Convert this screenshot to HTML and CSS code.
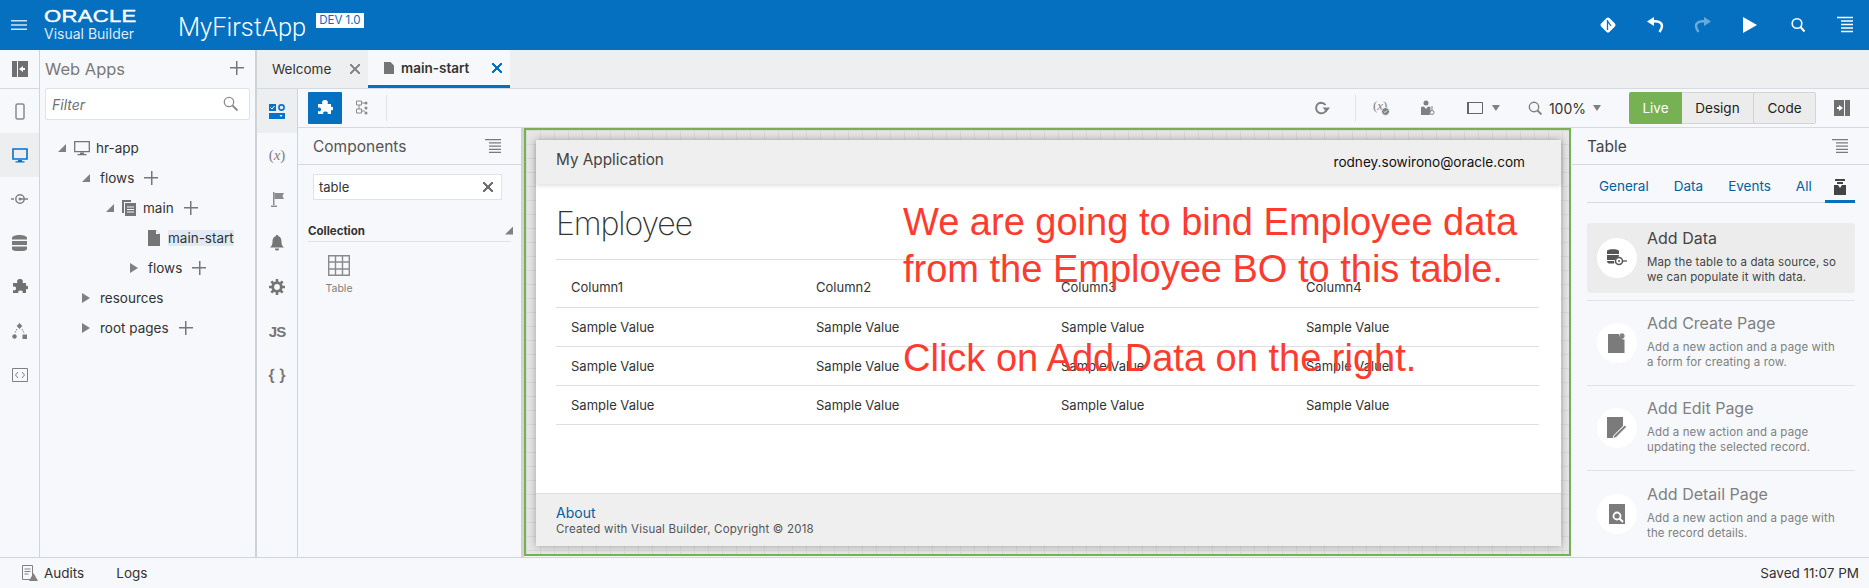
FILE: index.html
```html
<!DOCTYPE html>
<html lang="en">
<head>
    <meta charset="UTF-8">
    <title>MyFirstApp - Visual Builder</title>
    <link rel="stylesheet" href="styles.css">
</head>
<body>
    <header class="topbar">
        <svg class="hamburger" width="16" height="10" viewBox="0 0 16 10"><path d="M0 0h16v1.500H0zM0 4.200h16v1.500H0zM0 8.500h16V10H0z" fill="#cfe3f4"/></svg>
        <div class="brand">
            <span class="brand-oracle">ORACLE</span>
            <span class="brand-product">Visual Builder</span>
        </div>
        <span class="app-name">MyFirstApp</span>
        <span class="app-badge">DEV 1.0</span>
        <div class="topbar-actions">
            <svg width="18" height="18" viewBox="0 0 18 18"><path d="M9 1.500c.5 0 1 .2 1.400.6l5.500 5.500c.8.800.8 2 0 2.800l-5.500 5.500c-.8.800-2 .8-2.800 0L2.100 10.400c-.8-.8-.8-2 0-2.800l5.500-5.500c.4-.4.9-.6 1.400-.6z" fill="#fff"/><path d="M8.500 4v10M8.500 5l3.500 5" stroke="#0570c0" stroke-width="1.300" fill="none"/></svg>
            <svg width="18" height="18" viewBox="0 0 18 18"><path d="M1 5.500L8 1v9z" fill="#fff"/><path d="M6 5.500c5-1 10 .5 10 4.500 0 2.500-1 4-2.500 6" fill="none" stroke="#fff" stroke-width="2.400"/></svg>
            <svg width="18" height="18" viewBox="0 0 18 18"><path d="M17 5.500L10 1v9z" fill="#6aa9dc"/><path d="M12 5.500C7 4.500 2 6 2 10c0 2.500 1 4 2.500 6" fill="none" stroke="#6aa9dc" stroke-width="2.400"/></svg>
            <svg width="18" height="18" viewBox="0 0 18 18"><path d="M2 1l14 8-14 8z" fill="#fff"/></svg>
            <svg width="18" height="18" viewBox="0 0 18 18"><circle cx="8" cy="7.500" r="4.800" fill="none" stroke="#fff" stroke-width="1.600"/><path d="M11.500 11l4 4.500" stroke="#fff" stroke-width="2"/></svg>
            <svg width="18" height="18" viewBox="0 0 18 18"><path d="M1 1.500h16M5 5h12M5 8.500h12M5 12h12M5 15.500h12" stroke="#fff" stroke-width="1.500"/></svg>
        </div>
    </header>

    <div class="workspace">
        <nav class="rail">
            <div class="rail-item rail-top">
                <svg width="16" height="16" viewBox="0 0 16 16"><path d="M0 0h5v16H0zM6 0h10v16H6z" fill="#707070"/><path d="M7 8l4-3v2h2v2h-2v2z" fill="#fff"/></svg>
            </div>
            <div class="rail-item"><svg width="10" height="17" viewBox="0 0 10 17"><rect x="1" y="1" width="8" height="15" rx="1.500" fill="none" stroke="#8a8a8a" stroke-width="1.500"/></svg></div>
            <div class="rail-item rail-active"><svg width="16" height="15" viewBox="0 0 16 15"><path d="M1 1h14v10H1z" fill="none" stroke="#0572ce" stroke-width="1.600"/><path d="M6 12h4v1.200h2.500v1.200h-9v-1.200H6z" fill="#0572ce"/></svg></div>
            <div class="rail-item"><svg width="17" height="12" viewBox="0 0 17 12"><circle cx="9" cy="6" r="4.200" fill="none" stroke="#808080" stroke-width="1.500"/><circle cx="9" cy="6" r="1.500" fill="#808080"/><path d="M0 6h3M9 6h8" stroke="#808080" stroke-width="1.300"/></svg></div>
            <div class="rail-item"><svg width="15" height="16" viewBox="0 0 15 16"><path d="M0 3c0-4 15-4 15 0v1.500H0zM0 6h15v4H0zM0 11.500h15V14c0 3-15 3-15 0z" fill="#7a7a7a"/></svg></div>
            <div class="rail-item"><svg width="16" height="16" viewBox="0 0 16 16"><use href="#puzzle" fill="#707070"/></svg></div>
            <div class="rail-item"><svg width="15" height="16" viewBox="0 0 15 16"><path d="M7.500 0l2.800 3-2.800 3-2.800-3z" fill="#7a7a7a"/><circle cx="2.500" cy="13.500" r="2.200" fill="#7a7a7a"/><path d="M10.500 11.500h4.500V16h-4.500z" fill="#7a7a7a"/><path d="M5 6l-2 4M10 6l2 4" stroke="#7a7a7a" stroke-dasharray="1.500 1"/></svg></div>
            <div class="rail-item"><svg width="16" height="14" viewBox="0 0 16 14"><path d="M.5.500h15v13H.5z" fill="none" stroke="#808080"/><path d="M6 4L3.500 7 6 10M10 4l2.500 3L10 10" fill="none" stroke="#808080"/></svg></div>
        </nav>

        <aside class="navigator">
            <div class="nav-head">
                <span class="nav-title">Web Apps</span>
                <span class="plus plus-big"></span>
            </div>
            <div class="nav-filter">
                <span>Filter</span>
                <svg width="16" height="16" viewBox="0 0 16 16"><circle cx="6" cy="6" r="4.700" fill="none" stroke="#8c8c8c" stroke-width="1.300"/><path d="M9.500 9.500l5 5" stroke="#8c8c8c" stroke-width="2"/></svg>
            </div>
            <ul class="tree">
                <li class="tree-row level-0"><i class="tri tri-open"></i><svg class="tree-icon" width="16" height="15" viewBox="0 0 16 15"><path d="M.7.700h14.600v10H.7z" fill="none" stroke="#757575" stroke-width="1.300"/><path d="M6 11.500h4v1.500h2.500v1.200h-9V13H6z" fill="#757575"/></svg><span class="tree-label">hr-app</span></li>
                <li class="tree-row level-1"><i class="tri tri-open"></i><span class="tree-label">flows</span><span class="plus"></span></li>
                <li class="tree-row level-2"><i class="tri tri-open"></i><svg class="tree-icon" width="14" height="16" viewBox="0 0 14 16"><path d="M0 0h9v2H2v11H0z" fill="#757575"/><path d="M3 3h11v13H3z" fill="#757575"/><path d="M5 7h7M5 9.500h7M5 12h7" stroke="#f6f8fb"/></svg><span class="tree-label">main</span><span class="plus"></span></li>
                <li class="tree-row level-3"><svg class="tree-icon" width="12" height="16" viewBox="0 0 12 16"><path d="M0 0h8l4 4v12H0z" fill="#757575"/><path d="M8 0v4h4" fill="#f6f8fb"/></svg><span class="tree-label tree-selected">main-start</span></li>
                <li class="tree-row level-4"><i class="tri"></i><span class="tree-label">flows</span><span class="plus"></span></li>
                <li class="tree-row level-1"><i class="tri"></i><span class="tree-label">resources</span></li>
                <li class="tree-row level-1"><i class="tri"></i><span class="tree-label">root pages</span><span class="plus"></span></li>
            </ul>
        </aside>

        <div class="editor">
            <div class="tabs">
                <div class="tab">
                    <span class="tab-label">Welcome</span>
                    <span class="close close-grey"></span>
                </div>
                <div class="tab tab-active">
                    <svg width="10" height="12" viewBox="0 0 10 12"><path d="M0 0h6.500L10 3.500V12H0z" fill="#757575"/></svg>
                    <span class="tab-label">main-start</span>
                    <span class="close close-blue"></span>
                </div>
            </div>

            <div class="editor-body">
                <nav class="subrail">
                    <div class="rail-item rail-active"><svg width="16" height="15" viewBox="0 0 16 15"><path d="M0 0h7v7H0zM0 9h16v6H0z" fill="#0572ce"/><circle cx="12.500" cy="3.500" r="2.600" fill="none" stroke="#0572ce" stroke-width="1.600"/><path d="M1.500 3.500l1.500 1.500 2.500-3" fill="none" stroke="#fff"/><path d="M10.500 11h3l-1.500 2z" fill="#fff"/></svg></div>
                    <div class="rail-item"><span class="var-glyph">(<i>x</i>)</span></div>
                    <div class="rail-item"><svg width="13" height="16" viewBox="0 0 13 16"><path d="M2 1h1.500v13H2z" fill="#8c8c8c"/><path d="M3.500 2H13l-1.500 3L13 8H3.500z" fill="#8c8c8c"/><path d="M0 14.500h6V16H0z" fill="#8c8c8c"/></svg></div>
                    <div class="rail-item"><svg width="14" height="16" viewBox="0 0 14 16"><path d="M7 0c1 0 1.300.7 1.300 1.300C11 2 11.500 4.500 11.500 7c0 3 1 4 2.500 5.500H0C1.500 11 2.500 10 2.500 7c0-2.500.5-5 3.200-5.700C5.700.7 6 0 7 0zM5 13.500h4V14c0 2-4 2-4 0z" fill="#757575"/></svg></div>
                    <div class="rail-item"><svg width="16" height="16" viewBox="0 0 16 16"><circle cx="8" cy="8" r="4.300" fill="none" stroke="#757575" stroke-width="2.800"/><path d="M8 0v3M8 13v3M0 8h3M13 8h3M2.300 2.300l2.200 2.200M11.500 11.500l2.200 2.200M2.300 13.700l2.200-2.200M11.500 4.500l2.200-2.200" stroke="#757575" stroke-width="2.600"/></svg></div>
                    <div class="rail-item"><span class="js-glyph">JS</span></div>
                    <div class="rail-item"><span class="brace-glyph">{ }</span></div>
                </nav>

                <div class="designer">
                    <div class="toolbar">
                        <div class="tool-main"><svg width="16" height="16" viewBox="0 0 16 16"><use href="#puzzle" fill="#fff"/></svg></div>
                        <div class="tool-second"><svg width="12" height="16" viewBox="0 0 12 16"><path d="M.5 1h5v4h-5zM.5 9h5v4h-5z" fill="none" stroke="#8a8a8a"/><path d="M6 3h4M3 5v4M6 11h3" stroke="#8a8a8a"/><circle cx="10" cy="3" r="1.500" fill="#8a8a8a"/><circle cx="10" cy="8" r="1.500" fill="#8a8a8a"/><circle cx="10" cy="13" r="1.500" fill="#8a8a8a"/></svg></div>
                        <span class="tool-sep"></span>
                        <div class="tool-spacer"></div>
                        <svg class="tool-refresh" width="16" height="14" viewBox="0 0 16 14"><path d="M12.500 8.500A5.300 5.300 0 1 1 7 1.700c2 0 3.500.8 4.500 2.300" fill="none" stroke="#808080" stroke-width="2"/><path d="M8.500 6.500H16L12.500 11z" fill="#808080"/></svg>
                        <span class="tool-sep tool-sep-right"></span>
                        <span class="tool-var">(<i>x</i>)<svg class="tool-var-badge" width="9" height="9" viewBox="0 0 9 9"><circle cx="4.500" cy="4.500" r="4" fill="#808080" stroke="#f6f8fb"/><path d="M3 4.500l1 1 2-2" stroke="#fff" fill="none"/></svg></span>
                        <svg class="tool-person" width="14" height="16" viewBox="0 0 14 16"><circle cx="5" cy="3" r="2.500" fill="#808080"/><path d="M0 7l3-.5L5 9l2-2.500 2.500.5v4.500a3 3 0 0 0-.5 3.500H0z" fill="#808080"/><path d="M11 6v4" stroke="#808080"/><circle cx="11" cy="12.500" r="2" fill="#f6f8fb" stroke="#808080"/></svg>
                        <svg class="tool-frame" width="16" height="12" viewBox="0 0 16 12"><path d="M.5.500h15v11H.5z" fill="none" stroke="#666"/><path d="M0 0h2v12H0z" fill="#666"/></svg>
                        <i class="caret caret-frame"></i>
                        <svg class="tool-search" width="14" height="14" viewBox="0 0 14 14"><circle cx="6" cy="6" r="4.700" fill="none" stroke="#808080" stroke-width="1.400"/><path d="M9.500 9.500l4 4" stroke="#808080" stroke-width="1.800"/></svg>
                        <span class="tool-zoom">100%</span>
                        <i class="caret"></i>
                        <div class="mode-group">
                            <span class="mode mode-live">Live</span>
                            <span class="mode mode-design">Design</span>
                            <span class="mode mode-code">Code</span>
                        </div>
                        <svg class="tool-panel" width="16" height="16" viewBox="0 0 16 16"><path d="M0 0h10v16H0zM11 0h5v16h-5z" fill="#707070"/><path d="M9 8L5 5v2H3v2h2v2z" fill="#fff"/></svg>
                    </div>

                    <div class="panes">
                        <section class="components">
                            <div class="pane-head">
                                <span>Components</span>
                                <svg width="16" height="14" viewBox="0 0 16 14"><use href="#menu-lines"/></svg>
                            </div>
                            <div class="comp-search">
                                <span>table</span>
                                <span class="close close-dark"></span>
                            </div>
                            <div class="comp-group">
                                <span>Collection</span>
                                <i class="tri tri-open"></i>
                            </div>
                            <div class="comp-item">
                                <svg width="22" height="21" viewBox="0 0 22 21"><path d="M.7.700h20.600v19.600H.7zM.7 7h20.600M.7 14h20.600M7.500.7v19.600M14.500.7v19.600" fill="none" stroke="#8a8a8a" stroke-width="1.400"/></svg>
                                <span>Table</span>
                            </div>
                        </section>

                        <section class="canvas">
                            <div class="canvas-inner">
                                <div class="page">
                                    <div class="page-head">
                                        <span class="page-app">My Application</span>
                                        <span class="page-user">rodney.sowirono@oracle.com</span>
                                    </div>
                                    <div class="page-main">
                                        <h1>Employee</h1>
                                        <div class="sample-table">
                                            <div class="sample-row"><span>Column1</span><span>Column2</span><span>Column3</span><span>Column4</span></div>
                                            <div class="sample-row"><span>Sample Value</span><span>Sample Value</span><span>Sample Value</span><span>Sample Value</span></div>
                                            <div class="sample-row"><span>Sample Value</span><span>Sample Value</span><span>Sample Value</span><span>Sample Value</span></div>
                                            <div class="sample-row"><span>Sample Value</span><span>Sample Value</span><span>Sample Value</span><span>Sample Value</span></div>
                                        </div>
                                    </div>
                                    <div class="page-foot">
                                        <a class="page-about">About</a>
                                        <span class="page-copy">Created with Visual Builder, Copyright © 2018</span>
                                    </div>
                                    <p class="note note-top">We are going to bind Employee data<br>from the Employee BO to this table.</p>
                                    <p class="note note-bottom">Click on Add Data on the right.</p>
                                </div>
                            </div>
                        </section>

                        <section class="props">
                            <div class="pane-head pane-head-props">
                                <span>Table</span>
                                <svg width="16" height="14" viewBox="0 0 16 14"><use href="#menu-lines"/></svg>
                            </div>
                            <div class="prop-tabs">
                                <span>General</span>
                                <span>Data</span>
                                <span>Events</span>
                                <span>All</span>
                                <span class="prop-tab-active"><svg width="12" height="16" viewBox="0 0 12 16"><path d="M1 0h10v2H1zM3 3h6v2H3zM0 6h4l2 3 2-3h4v10H0z" fill="#444"/></svg></span>
                            </div>
                            <div class="quick quick-hover">
                                <div class="quick-icon"><svg width="20" height="18" viewBox="0 0 20 18"><path d="M0 2c0-2.500 12-2.500 12 0v3H0zM0 6h12v1.500c-2 .5-3.500 2-4 3.500H0zM0 12h7l.3 2.500H2c-1 0-2-1-2-2.500z" fill="#555"/><circle cx="12" cy="12" r="3.500" fill="none" stroke="#555" stroke-width="1.500"/><circle cx="12" cy="12" r="1" fill="#555"/><path d="M15 12h5" stroke="#555" stroke-width="1.300"/></svg></div>
                                <div class="quick-text">
                                    <span class="quick-title">Add Data</span>
                                    <span class="quick-desc">Map the table to a data source, so<br>we can populate it with data.</span>
                                </div>
                            </div>
                            <div class="quick">
                                <div class="quick-icon"><svg width="18" height="20" viewBox="0 0 18 20"><path d="M0 1h11c0 3 2.500 5.500 5.500 5.500V20H0z" fill="#7b7b7b"/><path d="M14 0v6M11 3h6M12 1l4 4M16 1l-4 4" stroke="#7b7b7b" stroke-width="1.200"/></svg></div>
                                <div class="quick-text">
                                    <span class="quick-title">Add Create Page</span>
                                    <span class="quick-desc">Add a new action and a page with<br>a form for creating a row.</span>
                                </div>
                            </div>
                            <div class="quick">
                                <div class="quick-icon"><svg width="20" height="22" viewBox="0 0 20 22"><path d="M0 0h16v9L6 19v2H0z" fill="#7b7b7b"/><path d="M18 8l1.500 2L9 20.500l-3 1 1-3z" fill="#7b7b7b" stroke="#fff" stroke-width=".8"/></svg></div>
                                <div class="quick-text">
                                    <span class="quick-title">Add Edit Page</span>
                                    <span class="quick-desc">Add a new action and a page<br>updating the selected record.</span>
                                </div>
                            </div>
                            <div class="quick">
                                <div class="quick-icon"><svg width="16" height="20" viewBox="0 0 16 20"><path d="M0 0h16v20H0z" fill="#7b7b7b"/><circle cx="8" cy="12" r="3.500" fill="none" stroke="#fff" stroke-width="1.800"/><path d="M10.500 14.500l3.500 3.500" stroke="#fff" stroke-width="2"/></svg></div>
                                <div class="quick-text">
                                    <span class="quick-title">Add Detail Page</span>
                                    <span class="quick-desc">Add a new action and a page with<br>the record details.</span>
                                </div>
                            </div>
                        </section>
                    </div>
                </div>
            </div>
        </div>
    </div>

    <footer class="statusbar">
        <svg width="16" height="16" viewBox="0 0 16 16"><path d="M.5.500h10v14H.5z" fill="none" stroke="#808080"/><path d="M2.500 4h6M2.500 6.500h6M2.500 9h4" stroke="#808080"/><path d="M11.500 8L16 16H7z" fill="#808080"/></svg>
        <span class="status-audits">Audits</span>
        <span class="status-logs">Logs</span>
        <span class="status-saved">Saved 11:07 PM</span>
    </footer>

    <svg class="sprites" width="0" height="0">
        <symbol id="puzzle" viewBox="0 0 16 16"><path d="M1 4h4.500c-1-2 0-4 2.500-4s3.500 2 2.500 4H14v3c1.500-.8 2-.2 2 1.500S15.500 10.800 14 10v4h-3.500c.8-1.200.2-2.500-2-2.500s-3 1.300-2 2.500H1v-3c2 1 3 0 3-1.500S3 7 1 8z"/></symbol>
        <symbol id="menu-lines" viewBox="0 0 16 14"><path d="M0 .7h16M4 3.900h12M4 7.100h12M4 10.300h12M4 13.300h12" stroke="#7a7a7a" stroke-width="1.300"/></symbol>
    </svg>
</body>
</html>
```

FILE: styles.css
```css
* {
    box-sizing: border-box;
}
html, body {
    margin: 0;
    height: 100%;
}
body {
    display: flex;
    flex-direction: column;
    overflow: hidden;
    font-family: Inter, "Noto Sans", sans-serif;
    font-size: 14px;
    color: #333;
    background-color: #f6f8fb;
}
ul {
    list-style: none;
    margin: 0;
    padding: 0;
}
.sprites {
    position: absolute;
}

/* top bar */
.topbar {
    flex: 0 0 50px;
    display: flex;
    align-items: center;
    padding-left: 11px;
    color: white;
    background-color: #0570c0;
}
.brand {
    display: flex;
    flex-direction: column;
    margin: 2px 0 0 17px;
    width: 134px;
}
.brand-oracle {
    font-family: "Liberation Sans", sans-serif;
    font-size: 16px;
    line-height: 15px;
    letter-spacing: 0.2px;
    -webkit-text-stroke: 0.4px white;
    transform: scaleX(1.38);
    transform-origin: left center;
}
.brand-product {
    font-size: 14px;
    line-height: 19px;
    color: #dcebf7;
}
.app-name {
    font-family: Roboto, sans-serif;
    font-size: 25.500px;
    font-weight: 300;
    margin-top: 3px;
}
.app-badge {
    align-self: flex-start;
    margin: 13px 0 0 10px;
    padding: 0 3px;
    font-size: 11.500px;
    line-height: 15px;
    color: #0570c0;
    background-color: white;
}
.topbar-actions {
    display: flex;
    gap: 29.500px;
    margin-left: auto;
    padding-right: 15px;
}
.hamburger {
    flex: none;
}

/* layout */
.workspace {
    flex: 1;
    display: flex;
    min-height: 0;
}
.rail {
    flex: 0 0 40px;
    border-right: 1px solid #cfd5dc;
}
.rail-item {
    display: flex;
    align-items: center;
    justify-content: center;
    height: 44px;
}
.rail-top {
    height: 39px;
    border-bottom: 1px solid #d5dae0;
}
.rail-active {
    background-color: #eceef0;
}
.navigator {
    flex: 0 0 217px;
    padding: 0 5px;
    border-right: 2px solid #cfd3d8;
}
.nav-head {
    display: flex;
    align-items: center;
    justify-content: space-between;
    height: 38px;
    padding-right: 6px;
}
.nav-title {
    font-size: 16.500px;
    color: #7a7a7a;
}
.plus {
    display: inline-block;
    width: 14px;
    height: 14px;
    margin-left: 10px;
    background:
        linear-gradient(#777, #777) center / 100% 1.500px no-repeat,
        linear-gradient(#777, #777) center / 1.500px 100% no-repeat;
}
.plus-big {
    margin-top: -2px;
}
.nav-filter {
    display: flex;
    align-items: center;
    justify-content: space-between;
    height: 32px;
    padding: 0 10px 0 6px;
    font-style: italic;
    font-size: 14px;
    color: #707070;
    background-color: white;
    border: 1px solid #dfe3e8;
    border-radius: 2px;
}
.tree {
    margin-top: 13px;
}
.tree-row {
    display: flex;
    align-items: center;
    height: 30px;
    font-size: 13.500px;
    color: #333;
}
.level-0 { padding-left: 13px; }
.level-1 { padding-left: 37px; }
.level-2 { padding-left: 61px; }
.level-3 { padding-left: 103px; }
.level-4 { padding-left: 85px; }
.tri {
    flex: none;
    width: 8px;
    height: 10px;
    margin-right: 10px;
    background-color: #808080;
    clip-path: polygon(0 0, 100% 50%, 0 100%);
}
.tri-open {
    height: 8px;
    clip-path: polygon(100% 0, 100% 100%, 0 100%);
}
.level-0 .tri {
    margin-right: 8px;
}
.level-2 .tri {
    margin-right: 8px;
}
.tree-icon {
    flex: none;
    margin-right: 6px;
}
.level-2 .tree-icon {
    margin-right: 7px;
}
.level-3 .tree-icon {
    margin-right: 8px;
}
.tree-selected {
    background-color: #dfeaf5;
}

/* tabs */
.editor {
    flex: 1;
    display: flex;
    flex-direction: column;
    min-width: 0;
}
.tabs {
    flex: 0 0 39px;
    display: flex;
    background-color: #eeeff1;
    border-bottom: 1px solid #d5dae0;
}
.tab {
    display: flex;
    align-items: center;
    justify-content: space-between;
    width: 111px;
    padding: 0 8px 0 15px;
    font-size: 13.500px;
}
.tab-active {
    justify-content: flex-start;
    width: 142px;
    padding: 0 8px 0 16px;
    font-weight: 600;
    background-color: #f6f8fb;
    border-bottom: 3px solid #0570c0;
}
.tab-active .tab-label {
    margin: 0 auto 0 7px;
}
.close {
    display: inline-block;
    width: 10px;
    height: 10px;
    background:
        linear-gradient(45deg, transparent 43%, currentColor 43%, currentColor 57%, transparent 57%),
        linear-gradient(-45deg, transparent 43%, currentColor 43%, currentColor 57%, transparent 57%);
}
.close-grey { color: #8a8a8a; }
.close-blue { color: #0570c0; }
.close-dark { color: #707070; }

/* editor */
.editor-body {
    flex: 1;
    display: flex;
    min-height: 0;
}
.subrail {
    flex: 0 0 41px;
    border-right: 1px solid #cfd5dc;
}
.var-glyph {
    font-family: "Liberation Serif", serif;
    font-size: 15px;
    color: #808080;
}
.js-glyph {
    font-family: "Liberation Sans", sans-serif;
    font-weight: bold;
    font-size: 15px;
    letter-spacing: -1px;
    color: #757575;
}
.brace-glyph {
    font-size: 16px;
    font-weight: 600;
    color: #757575;
}
.designer {
    flex: 1;
    display: flex;
    flex-direction: column;
    min-width: 0;
}
.toolbar {
    flex: 0 0 39px;
    display: flex;
    align-items: center;
    padding: 0 19px 0 10px;
    border-bottom: 1px solid #d5dae0;
}
.tool-main {
    display: flex;
    align-items: center;
    justify-content: center;
    width: 34px;
    height: 32px;
    background-color: #0570c0;
    border-radius: 1px;
}
.tool-second {
    display: flex;
    margin-left: 14px;
}
.tool-sep {
    width: 1px;
    height: 26px;
    margin-left: 18px;
    background-color: #dfe3e8;
}
.tool-spacer {
    flex: 1;
}
.tool-sep-right {
    margin-left: 25px;
}
.tool-var {
    position: relative;
    width: 16px;
    margin-left: 17px;
    font-family: "Liberation Serif", serif;
    font-size: 13px;
    line-height: 16px;
    margin-bottom: 5px;
    color: #808080;
    white-space: nowrap;
}
.tool-var-badge {
    position: absolute;
    right: -1px;
    top: 9px;
}
.tool-person { margin-left: 32px; }
.tool-frame { margin-left: 32px; }
.caret {
    width: 8px;
    height: 6px;
    margin-left: 7px;
    background-color: #808080;
    clip-path: polygon(0 0, 100% 0, 50% 100%);
}
.caret-frame {
    margin-left: 9px;
}
.tool-search { margin-left: 28px; }
.tool-zoom {
    margin-left: 7px;
    font-size: 14px;
}
.mode-group {
    display: flex;
    height: 32px;
    margin-left: 28px;
}
.mode {
    display: flex;
    align-items: center;
    justify-content: center;
    font-size: 13.500px;
    color: #222;
    background-color: #ececec;
    border: 1px solid #d4d4d4;
    border-left: 0;
}
.mode-design {
    width: 72px;
}
.mode-code {
    width: 62px;
    border-radius: 0 2px 2px 0;
}
.mode-live {
    width: 53px;
    color: white;
    background-color: #76b153;
    border: 0;
    border-radius: 2px 0 0 2px;
}
.tool-panel { margin-left: 18px; }

/* panes */
.panes {
    flex: 1;
    display: flex;
    min-height: 0;
}
.components {
    flex: 0 0 223px;
}
.pane-head {
    display: flex;
    align-items: center;
    justify-content: space-between;
    height: 37px;
    padding: 0 20px 0 15px;
    font-size: 15.500px;
    color: #555;
    border-bottom: 1px solid #d5dae0;
}
.comp-search {
    display: flex;
    align-items: center;
    justify-content: space-between;
    height: 26px;
    margin: 9px 19px 0 15px;
    padding: 0 8px 0 5px;
    font-size: 13px;
    background-color: white;
    border: 1px solid #dfe3e8;
}
.comp-group {
    display: flex;
    align-items: center;
    justify-content: space-between;
    height: 23px;
    margin: 19px 10px 0;
    padding-top: 1px;
    font-size: 11.500px;
    font-weight: 700;
    border-bottom: 1px solid #dfe3e8;
}
.comp-group .tri {
    margin: 0 -2px 0 0;
}
.comp-item {
    display: flex;
    flex-direction: column;
    align-items: center;
    width: 46px;
    margin: 13px 0 0 18px;
    font-size: 10.500px;
    color: #808080;
}
.comp-item span {
    margin-top: 6px;
}

/* canvas */
.canvas {
    flex: 1;
    min-width: 0;
    padding: 0 1px 1px 0;
    border-left: 3px solid #cfd3d8;
}
.canvas-inner {
    height: 100%;
    padding: 10px 8px 8px 10px;
    border: 2px solid #76b153;
    background-color: #e6e6e6;
    background-image:
        linear-gradient(#d9d9d9 1px, transparent 1px),
        linear-gradient(90deg, #d9d9d9 1px, transparent 1px);
    background-size: 14px 14px;
}
.page {
    position: relative;
    display: flex;
    flex-direction: column;
    height: 100%;
    background-color: white;
    box-shadow: 0 0 8px rgba(0,0,0,0.3);
}
.page-head {
    flex: 0 0 44px;
    display: flex;
    align-items: center;
    justify-content: space-between;
    padding: 0 36px 0 20px;
    background-color: #efefef;
    box-shadow: 0 2px 4px rgba(0,0,0,0.12);
}
.page-app {
    padding-bottom: 5px;
    font-size: 15.300px;
    color: #444;
}
.page-user {
    font-size: 13.600px;
    color: #111;
}
.page-main {
    flex: 1;
    padding: 0 22px 0 20px;
}
.page-main h1 {
    margin: 0;
    height: 76px;
    padding-top: 20px;
    font-size: 32px;
    line-height: 40px;
    font-weight: 200;
    letter-spacing: -1.1px;
    color: #333;
    border-bottom: 1px solid #dfdfdf;
}
.sample-row {
    display: grid;
    grid-template-columns: 245px 245px 245px auto;
    align-items: center;
    height: 39px;
    padding-left: 15px;
    font-size: 13px;
    color: #333;
    border-bottom: 1px solid #dfdfdf;
}
.sample-row:first-child {
    height: 48px;
    padding-top: 6px;
}
.page-foot {
    flex: 0 0 53px;
    display: flex;
    flex-direction: column;
    padding: 10px 20px 0;
    background-color: #efefef;
    border-top: 1px solid #dfdfdf;
}
.page-about {
    font-size: 14px;
    line-height: 18px;
    color: #04609f;
}
.page-copy {
    font-size: 11.500px;
    line-height: 15px;
    letter-spacing: 0.2px;
    color: #555;
}
.note {
    position: absolute;
    margin: 0;
    font-family: "Liberation Sans", sans-serif;
    font-size: 38px;
    line-height: 47px;
    color: #ff3b30;
    white-space: nowrap;
}
.note-top {
    left: 367px;
    top: 59px;
}
.note-bottom {
    left: 367px;
    top: 195px;
}

/* properties */
.props {
    flex: 0 0 297px;
    min-width: 0;
}
.pane-head-props {
    padding: 0 21px 0 15px;
    color: #444;
}
.prop-tabs {
    display: flex;
    align-items: flex-end;
    gap: 25px;
    height: 38px;
    margin: 0 14px 0 15px;
    padding: 0 0 8px 12px;
    font-size: 13.500px;
    color: #04609f;
    border-bottom: 1px solid #d5dae0;
}
.prop-tab-active {
    display: flex;
    justify-content: center;
    width: 32px;
    margin: 0 0 -9px -12px;
    padding-bottom: 5px;
    border-bottom: 3px solid #0570c0;
}
.quick {
    display: flex;
    align-items: center;
    height: 85px;
    margin: 0 14px 0 15px;
    padding-left: 10px;
    border-bottom: 1px solid #dfe3e8;
    color: #808080;
}
.quick:last-child {
    border-bottom: 0;
}
.quick-hover {
    height: 70px;
    margin-top: 20px;
    color: #444;
    background-color: #ececec;
    border-radius: 4px;
    border-bottom: 0;
}
.quick-hover + .quick {
    height: 86px;
    margin-top: 7px;
    border-top: 1px solid #dfe3e8;
}
.quick-icon {
    flex: none;
    display: flex;
    align-items: center;
    justify-content: center;
    width: 40px;
    height: 40px;
    background-color: white;
    border-radius: 50%;
}
.quick-text {
    display: flex;
    flex-direction: column;
    margin-left: 10px;
    padding-bottom: 2.500px;
}
.quick-title {
    font-size: 16px;
    line-height: 20px;
}
.quick-desc {
    margin-top: 7px;
    font-size: 11.500px;
    line-height: 15px;
    letter-spacing: 0.12px;
}

/* status bar */
.statusbar {
    flex: 0 0 31px;
    display: flex;
    align-items: center;
    padding: 0 10px 0 22px;
    font-size: 13.500px;
    color: #333;
    border-top: 1px solid #cfd5dc;
}
.status-audits {
    margin-left: 6px;
}
.status-logs {
    margin-left: 32px;
}
.status-saved {
    margin-left: auto;
}
```
